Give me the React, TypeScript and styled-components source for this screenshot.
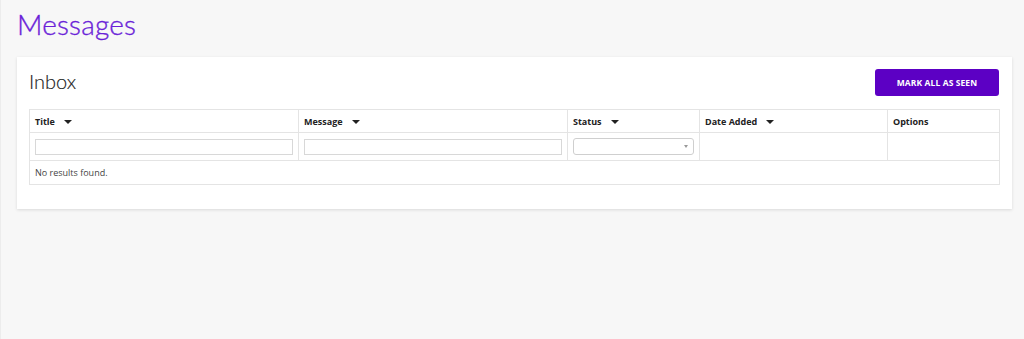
import * as React from 'react';
import styled, { createGlobalStyle } from 'styled-components';

const GlobalStyle = createGlobalStyle`
    html, body {
        margin: 0;
        padding: 0;
        background: #f7f7f7;
    }

    body {
        font-family: 'Open Sans', 'Noto Sans', sans-serif;
        color: #333;
        min-height: 339px;
        border-left: 1px solid #ececec;
        box-sizing: border-box;
    }
`;

interface Column {
    label: string;
    width: number;
    sortable?: boolean;
    filter?: 'text' | 'select';
}

const columns: Column[] = [
    { label: 'Title', width: 269, sortable: true, filter: 'text' },
    { label: 'Message', width: 269, sortable: true, filter: 'text' },
    { label: 'Status', width: 132, sortable: true, filter: 'select' },
    { label: 'Date Added', width: 188, sortable: true },
    { label: 'Options', width: 112 }
];

const Page = styled.div`
    padding: 6px 12px 0 16px;
`;

const PageTitle = styled.h1`
    margin: 0 0 15px 0;
    font-family: 'Lato', 'Noto Sans', sans-serif;
    font-weight: 300;
    font-size: 28px;
    line-height: 36px;
    color: #6b1fd8;
    letter-spacing: 0.2px;
    -webkit-text-stroke: 0.35px #6b1fd8;
`;

const Card = styled.div`
    background: #fff;
    box-shadow: 0 1px 3px rgba(0, 0, 0, 0.12);
    padding: 12px 13px 24px 12px;
`;

const CardHeader = styled.div`
    display: flex;
    align-items: flex-start;
    justify-content: space-between;
    height: 40px;
`;

const CardTitle = styled.h2`
    margin: 0;
    font-family: 'Lato', 'Noto Sans', sans-serif;
    font-weight: 300;
    font-size: 20px;
    line-height: 24px;
    color: #222;
    -webkit-text-stroke: 0.15px #222;
`;

const Button = styled.button`
    background: #5c00c4;
    color: #fff;
    border: none;
    border-radius: 3px;
    height: 27px;
    width: 124px;
    padding: 0;
    font-family: 'Open Sans', sans-serif;
    font-size: 8.5px;
    font-weight: 700;
    letter-spacing: 0.1px;
    cursor: pointer;
`;

const Table = styled.table`
    width: 970px;
    border-collapse: collapse;
    table-layout: fixed;
    font-size: 9px;
`;

const HeadCell = styled.th`
    height: 22px;
    padding: 0 5px;
    border: 1px solid #e4e4e4;
    text-align: left;
    font-weight: 700;
    color: #222;
    white-space: nowrap;
`;

const Caret = styled.span`
    display: inline-block;
    margin-left: 9px;
    width: 0;
    height: 0;
    border-left: 4px solid transparent;
    border-right: 4px solid transparent;
    border-top: 4px solid #222;
    vertical-align: 1px;
`;

const FilterCell = styled.td`
    height: 27px;
    padding: 0 5px;
    border: 1px solid #e4e4e4;
`;

const TextFilter = styled.input`
    display: block;
    width: 100%;
    height: 16px;
    box-sizing: border-box;
    border: 1px solid #d8d8d8;
    margin: 0;
    padding: 0 3px;
    background: #fff;
    outline: none;
`;

const SelectFilter = styled.div`
    position: relative;
    height: 17px;
    box-sizing: border-box;
    border: 1px solid #cfcfcf;
    border-radius: 3px;
    background: #fff;
`;

const SelectArrow = styled.span`
    position: absolute;
    right: 5px;
    top: 6px;
    width: 0;
    height: 0;
    border-left: 2.5px solid transparent;
    border-right: 2.5px solid transparent;
    border-top: 3px solid #999;
`;

const EmptyCell = styled.td`
    height: 23px;
    padding: 0 5px;
    border: 1px solid #e4e4e4;
    color: #444;
`;

export default function App() {
    return (
        <>
            <GlobalStyle />
            <Page>
                <PageTitle>Messages</PageTitle>
                <Card>
                    <CardHeader>
                        <CardTitle>Inbox</CardTitle>
                        <Button>MARK ALL AS SEEN</Button>
                    </CardHeader>
                    <Table>
                        <colgroup>
                            {columns.map(c => (
                                <col key={c.label} style={{ width: c.width }} />
                            ))}
                        </colgroup>
                        <thead>
                            <tr>
                                {columns.map(c => (
                                    <HeadCell key={c.label}>
                                        {c.label}
                                        {c.sortable && <Caret />}
                                    </HeadCell>
                                ))}
                            </tr>
                            <tr>
                                {columns.map(c => (
                                    <FilterCell key={c.label}>
                                        {c.filter === 'text' && <TextFilter type="text" />}
                                        {c.filter === 'select' && (
                                            <SelectFilter>
                                                <SelectArrow />
                                            </SelectFilter>
                                        )}
                                    </FilterCell>
                                ))}
                            </tr>
                        </thead>
                        <tbody>
                            <tr>
                                <EmptyCell colSpan={columns.length}>No results found.</EmptyCell>
                            </tr>
                        </tbody>
                    </Table>
                </Card>
            </Page>
        </>
    );
}
